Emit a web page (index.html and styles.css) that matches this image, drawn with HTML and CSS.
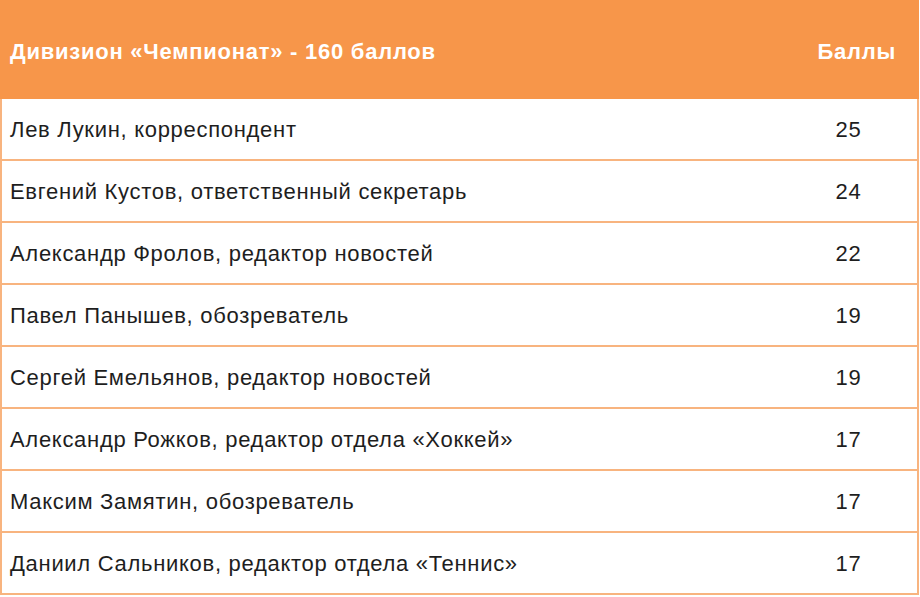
FILE: index.html
```html
<!DOCTYPE html>
<html lang="ru">
<head>
<meta charset="utf-8">
<title>Дивизион «Чемпионат»</title>
<link rel="stylesheet" href="styles.css">
</head>
<body>
<div class="board">
  <div class="row head">
    <div class="name">Дивизион «Чемпионат» - 160 баллов</div>
    <div class="pts">Баллы</div>
  </div>
  <div class="row"><div class="name">Лев Лукин, корреспондент</div><div class="pts">25</div></div>
  <div class="row"><div class="name">Евгений Кустов, ответственный секретарь</div><div class="pts">24</div></div>
  <div class="row"><div class="name">Александр Фролов, редактор новостей</div><div class="pts">22</div></div>
  <div class="row"><div class="name">Павел Панышев, обозреватель</div><div class="pts">19</div></div>
  <div class="row"><div class="name">Сергей Емельянов, редактор новостей</div><div class="pts">19</div></div>
  <div class="row"><div class="name">Александр Рожков, редактор отдела «Хоккей»</div><div class="pts">17</div></div>
  <div class="row"><div class="name">Максим Замятин, обозреватель</div><div class="pts">17</div></div>
  <div class="row"><div class="name">Даниил Сальников, редактор отдела «Теннис»</div><div class="pts">17</div></div>
</div>
</body>
</html>
```

FILE: styles.css
```css
html, body {
  margin: 0;
  padding: 0;
  background: #ffffff;
}

.board {
  width: 919px;
  box-sizing: border-box;
  border-left: 2px solid #f8b47f;
  border-right: 2px solid #f8b47f;
  font-family: "Liberation Sans", Arial, sans-serif;
  font-size: 22px;
  letter-spacing: 0.7px;
  color: #1e1e1e;
}

.row {
  display: grid;
  grid-template-columns: 1fr 140px;
  align-items: center;
  height: 62px;
  box-sizing: border-box;
  border-bottom: 2px solid #f8b47f;
}

.row .name {
  padding-left: 8px;
  padding-top: 1px;
}

.row .pts {
  text-align: center;
  padding-top: 1px;
  padding-left: 3px;
}

.row.head {
  height: 99px;
  background: #f7964a;
  color: #ffffff;
  font-weight: bold;
  letter-spacing: 0.75px;
  border-bottom: none;
  margin-left: -2px;
  margin-right: -2px;
  padding-left: 2px;
  padding-right: 2px;
}

.row.head .name,
.row.head .pts {
  padding-top: 4px;
}

.row.head .pts {
  text-align: right;
  padding-right: 21px;
}
```
